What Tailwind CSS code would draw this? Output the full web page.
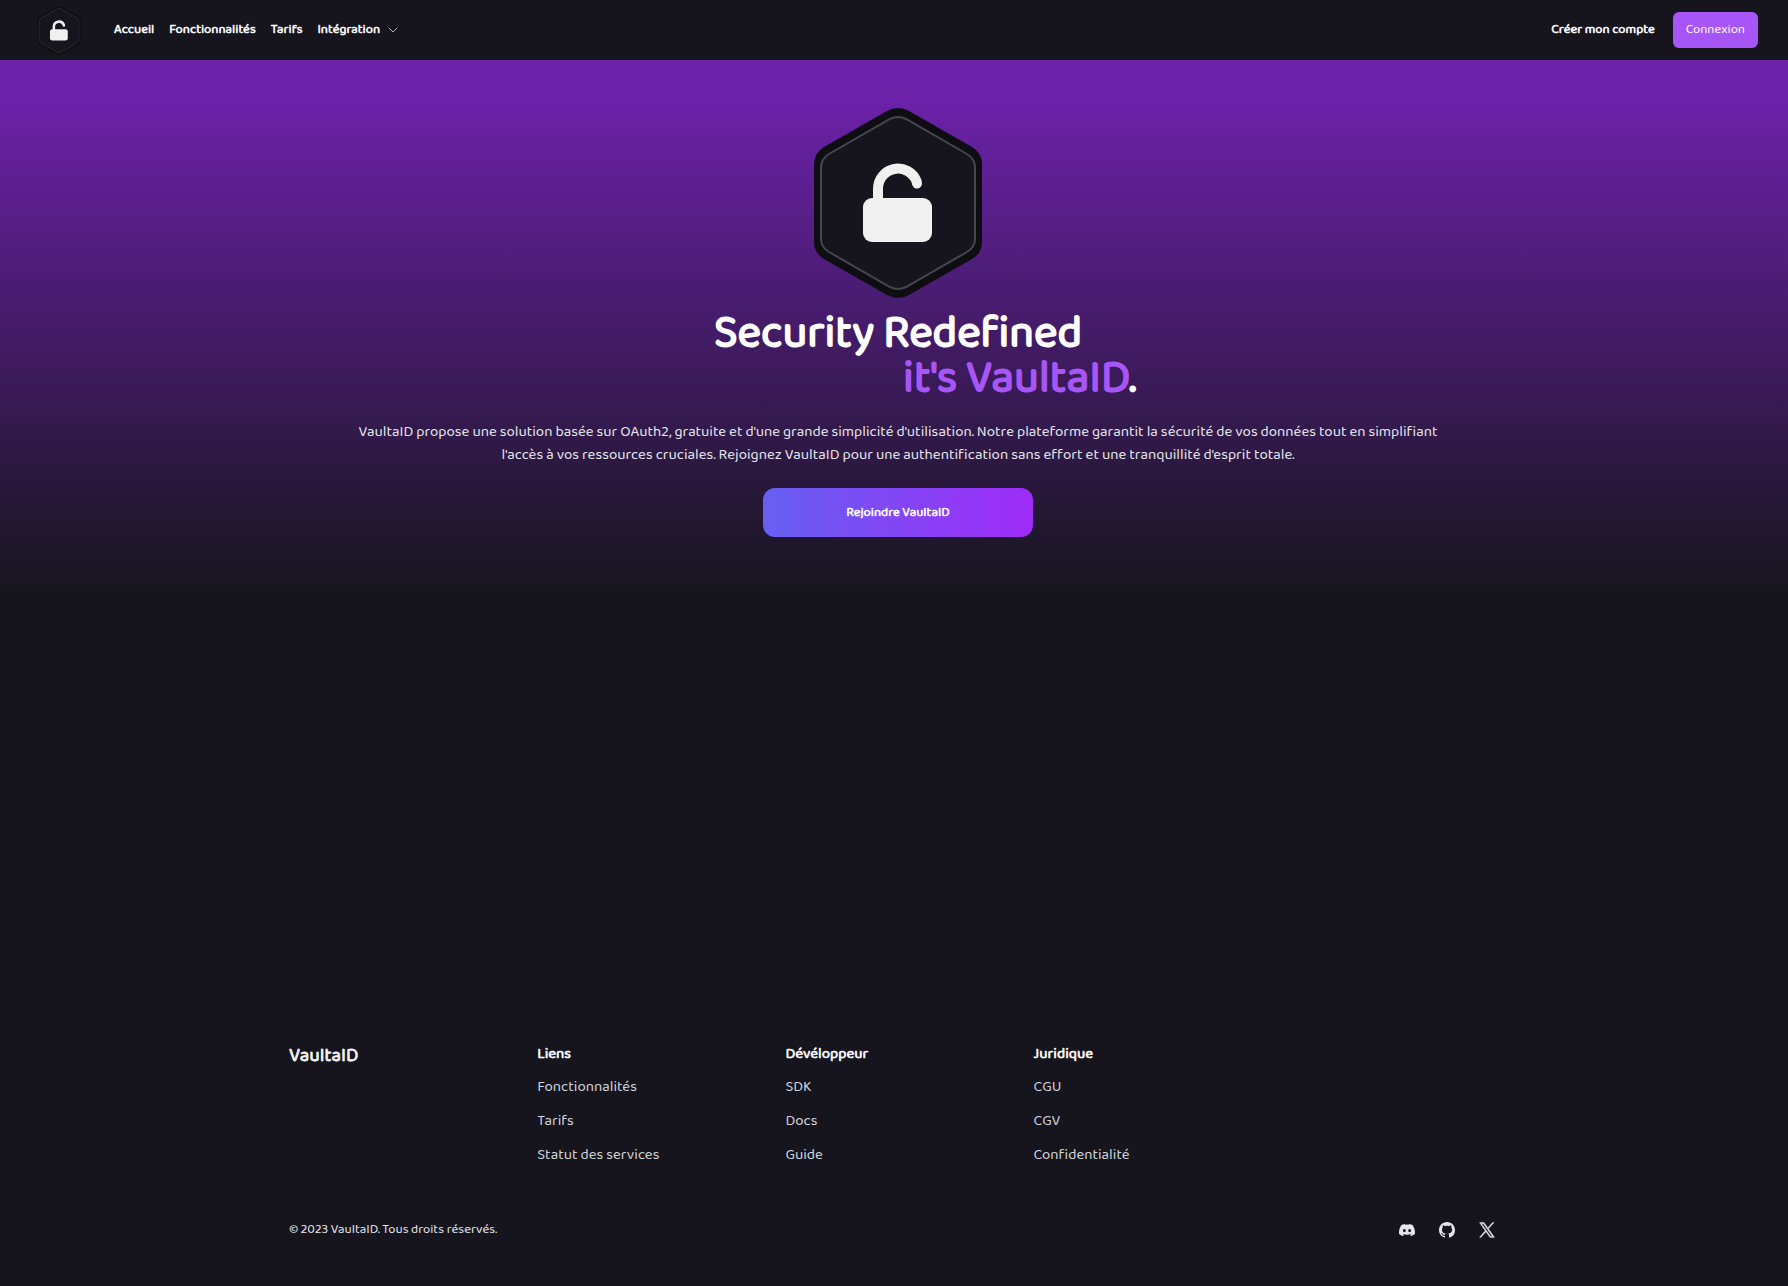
<!DOCTYPE html>
<html lang="fr">
<head>
  <meta charset="UTF-8" />
  <meta name="viewport" content="width=device-width, initial-scale=1.0" />
  <title>VaultaID</title>
  <script src="https://cdn.jsdelivr.net/npm/@tailwindcss/browser@4"></script>
</head>
<body class="flex min-h-screen flex-col bg-[#16151d] font-['Baloo_2',Lato,sans-serif] text-white">

  <!-- Header -->
  <header class="flex h-[60px] items-center justify-between bg-[#16151d] pl-[37px] pr-[30px]">
    <nav class="flex items-center text-[13px] [-webkit-text-stroke:0.04em]">
      <a href="#" aria-label="VaultaID" class="mr-[33px]">
        <svg class="h-[49px] w-11" viewBox="0 0 170 190" fill="none">
          <path d="M74 3Q85 -3 96 3L159 39Q169 45 169 56V134Q169 145 159 151L96 187Q85 193 74 187L11 151Q1 145 1 134V56Q1 45 11 39Z" fill="#0e0d12" />
          <path d="M77 11Q85 7 93 11L154 46Q162 51 162 59V131Q162 139 154 144L93 179Q85 183 77 179L16 144Q8 139 8 131V59Q8 51 16 46Z" fill="#16151d" stroke="#2f2e36" stroke-width="3" />
          <path d="M65 94V80.5A20 20 0 0 1 103.500 73L104 75.500" stroke="#f0f0f0" stroke-width="10" stroke-linecap="round" />
          <rect x="50" y="90" width="69" height="44" rx="9" fill="#f0f0f0" />
        </svg>
      </a>
      <div class="flex items-center gap-[15px]">
        <a href="#">Accueil</a>
        <a href="#">Fonctionnalités</a>
        <a href="#">Tarifs</a>
        <button type="button" class="flex items-center gap-2">
          Intégration
          <svg class="size-[10px]" viewBox="0 0 10 10" fill="none" stroke="#b5b4ba" stroke-linecap="round" stroke-linejoin="round"><path d="M1 3L5 7L9 3" /></svg>
        </button>
      </div>
    </nav>
    <div class="flex items-center gap-[18px] text-[13px]">
      <a href="#" class="[-webkit-text-stroke:0.04em]">Créer mon compte</a>
      <a href="#" class="rounded-md bg-[#a855f7] px-[13px] py-2 leading-5">Connexion</a>
    </div>
  </header>

  <!-- Hero -->
  <main class="flex flex-col items-center bg-linear-to-b/srgb from-[#6b21a8] from-8% to-[#16151d] pt-12 pb-14 pl-2">
    <svg class="h-[190px] w-[170px]" viewBox="0 0 170 190" fill="none">
      <path d="M74 3Q85 -3 96 3L159 39Q169 45 169 56V134Q169 145 159 151L96 187Q85 193 74 187L11 151Q1 145 1 134V56Q1 45 11 39Z" fill="#0e0d12" />
      <path d="M77 11Q85 7 93 11L154 46Q162 51 162 59V131Q162 139 154 144L93 179Q85 183 77 179L16 144Q8 139 8 131V59Q8 51 16 46Z" fill="#16151d" stroke="#47464e" stroke-width="2" />
      <path d="M65 94V80.5A20 20 0 0 1 103.500 73L104 75.500" stroke="#f0f0f0" stroke-width="10" stroke-linecap="round" />
      <rect x="50" y="90" width="69" height="44" rx="9" fill="#f0f0f0" />
    </svg>
    <h1 class="mt-[13px] text-center text-[45px] leading-[45px] [-webkit-text-stroke:0.04em]">
      Security Redefined
      <span class="block pl-[243px]"><span class="text-[#a855f7]">it's VaultaID</span>.</span>
    </h1>
    <p class="mt-5 max-w-[1100px] text-center text-[15px] leading-[23px] text-gray-200">VaultaID propose une solution basée sur OAuth2, gratuite et d'une grande simplicité d'utilisation. Notre plateforme garantit la sécurité de vos données tout en simplifiant l'accès à vos ressources cruciales. Rejoignez VaultaID pour une authentification sans effort et une tranquillité d'esprit totale.</p>
    <button type="button" class="mt-[21px] h-[49px] w-[270px] rounded-xl bg-linear-to-r/srgb from-[#6660f2] to-[#9f2bf8] text-[13px] [-webkit-text-stroke:0.04em]">Rejoindre VaultaID</button>
  </main>

  <!-- Footer -->
  <footer class="mx-auto mt-auto w-full max-w-7xl pr-9 pb-[46px] pl-[35px]">
    <div class="grid grid-cols-5 gap-8">
      <p class="text-[19px] leading-6 text-gray-100 [-webkit-text-stroke:0.04em]">VaultaID</p>
      <div>
        <h2 class="text-[15px] leading-5 [-webkit-text-stroke:0.04em]">Liens</h2>
        <ul class="mt-[13px] space-y-[14px] text-[15px] leading-5 text-gray-300">
          <li><a href="#">Fonctionnalités</a></li>
          <li><a href="#">Tarifs</a></li>
          <li><a href="#">Statut des services</a></li>
        </ul>
      </div>
      <div>
        <h2 class="text-[15px] leading-5 [-webkit-text-stroke:0.04em]">Dévéloppeur</h2>
        <ul class="mt-[13px] space-y-[14px] text-[15px] leading-5 text-gray-300">
          <li><a href="#">SDK</a></li>
          <li><a href="#">Docs</a></li>
          <li><a href="#">Guide</a></li>
        </ul>
      </div>
      <div>
        <h2 class="text-[15px] leading-5 [-webkit-text-stroke:0.04em]">Juridique</h2>
        <ul class="mt-[13px] space-y-[14px] text-[15px] leading-5 text-gray-300">
          <li><a href="#">CGU</a></li>
          <li><a href="#">CGV</a></li>
          <li><a href="#">Confidentialité</a></li>
        </ul>
      </div>
    </div>
    <div class="mt-[55px] flex items-center justify-between pr-[3px]">
      <p class="text-[13px] leading-5 text-gray-200">© 2023 VaultaID. Tous droits réservés.</p>
      <div class="flex items-center gap-6 text-gray-200">
        <a href="#" aria-label="Discord">
          <svg class="size-4" viewBox="0 0 16 16" fill="currentColor"><path d="M13.545 2.907a13.227 13.227 0 0 0-3.257-1.011.05.05 0 0 0-.052.025c-.141.25-.297.577-.406.833a12.19 12.19 0 0 0-3.658 0 8.258 8.258 0 0 0-.412-.833.051.051 0 0 0-.052-.025c-1.125.194-2.22.534-3.257 1.011a.041.041 0 0 0-.021.018C.356 6.024-.213 9.047.066 12.032c.001.014.01.028.021.037a13.276 13.276 0 0 0 3.995 2.02.05.05 0 0 0 .056-.019c.308-.42.582-.863.818-1.329a.05.05 0 0 0-.028-.07 8.735 8.735 0 0 1-1.248-.595.05.05 0 0 1-.005-.085c.084-.063.168-.129.248-.195a.05.05 0 0 1 .051-.007c2.619 1.196 5.454 1.196 8.041 0a.052.052 0 0 1 .053.007c.08.066.164.132.248.195a.051.051 0 0 1-.004.085 8.254 8.254 0 0 1-1.249.594.05.05 0 0 0-.027.07c.24.465.515.909.817 1.329a.05.05 0 0 0 .056.019 13.235 13.235 0 0 0 4.001-2.02.049.049 0 0 0 .021-.037c.334-3.451-.559-6.449-2.366-9.106a.034.034 0 0 0-.02-.019Zm-8.198 7.307c-.789 0-1.438-.724-1.438-1.612 0-.889.637-1.613 1.438-1.613.807 0 1.45.73 1.438 1.613 0 .888-.637 1.612-1.438 1.612Zm5.316 0c-.788 0-1.438-.724-1.438-1.612 0-.889.637-1.613 1.438-1.613.807 0 1.451.73 1.438 1.613 0 .888-.631 1.612-1.438 1.612Z" /></svg>
        </a>
        <a href="#" aria-label="GitHub">
          <svg class="size-4" viewBox="0 0 16 16" fill="currentColor"><path d="M8 0C3.58 0 0 3.58 0 8c0 3.54 2.29 6.53 5.47 7.59.4.07.55-.17.55-.38 0-.19-.01-.82-.01-1.49-2.01.37-2.53-.49-2.69-.94-.09-.23-.48-.94-.82-1.13-.28-.15-.68-.52-.01-.53.63-.01 1.08.58 1.23.82.72 1.21 1.87.87 2.33.66.07-.52.28-.87.51-1.07-1.78-.2-3.64-.89-3.64-3.95 0-.87.31-1.59.82-2.15-.08-.2-.36-1.02.08-2.12 0 0 .67-.21 2.2.82.64-.18 1.32-.27 2-.27s1.36.09 2 .27c1.53-1.04 2.2-.82 2.2-.82.44 1.1.16 1.92.08 2.12.51.56.82 1.27.82 2.15 0 3.07-1.87 3.75-3.65 3.95.29.25.54.73.54 1.48 0 1.07-.01 1.93-.01 2.2 0 .21.15.46.55.38A8.01 8.01 0 0 0 16 8c0-4.42-3.58-8-8-8Z" /></svg>
        </a>
        <a href="#" aria-label="X">
          <svg class="size-4" viewBox="-1 -1 26 26" fill="currentColor" stroke="currentColor" stroke-width=".9"><path d="M14.258 10.152 23.176 0h-2.113l-7.747 8.813L7.133 0H0l9.352 13.328L0 23.973h2.113l8.176-9.309 6.531 9.309h7.133l-9.695-13.821Zm-2.895 3.293-.949-1.328L2.875 1.56h3.246l6.086 8.523.945 1.328 7.91 11.078h-3.246l-6.453-9.044Z" /></svg>
        </a>
      </div>
    </div>
  </footer>

</body>
</html>
